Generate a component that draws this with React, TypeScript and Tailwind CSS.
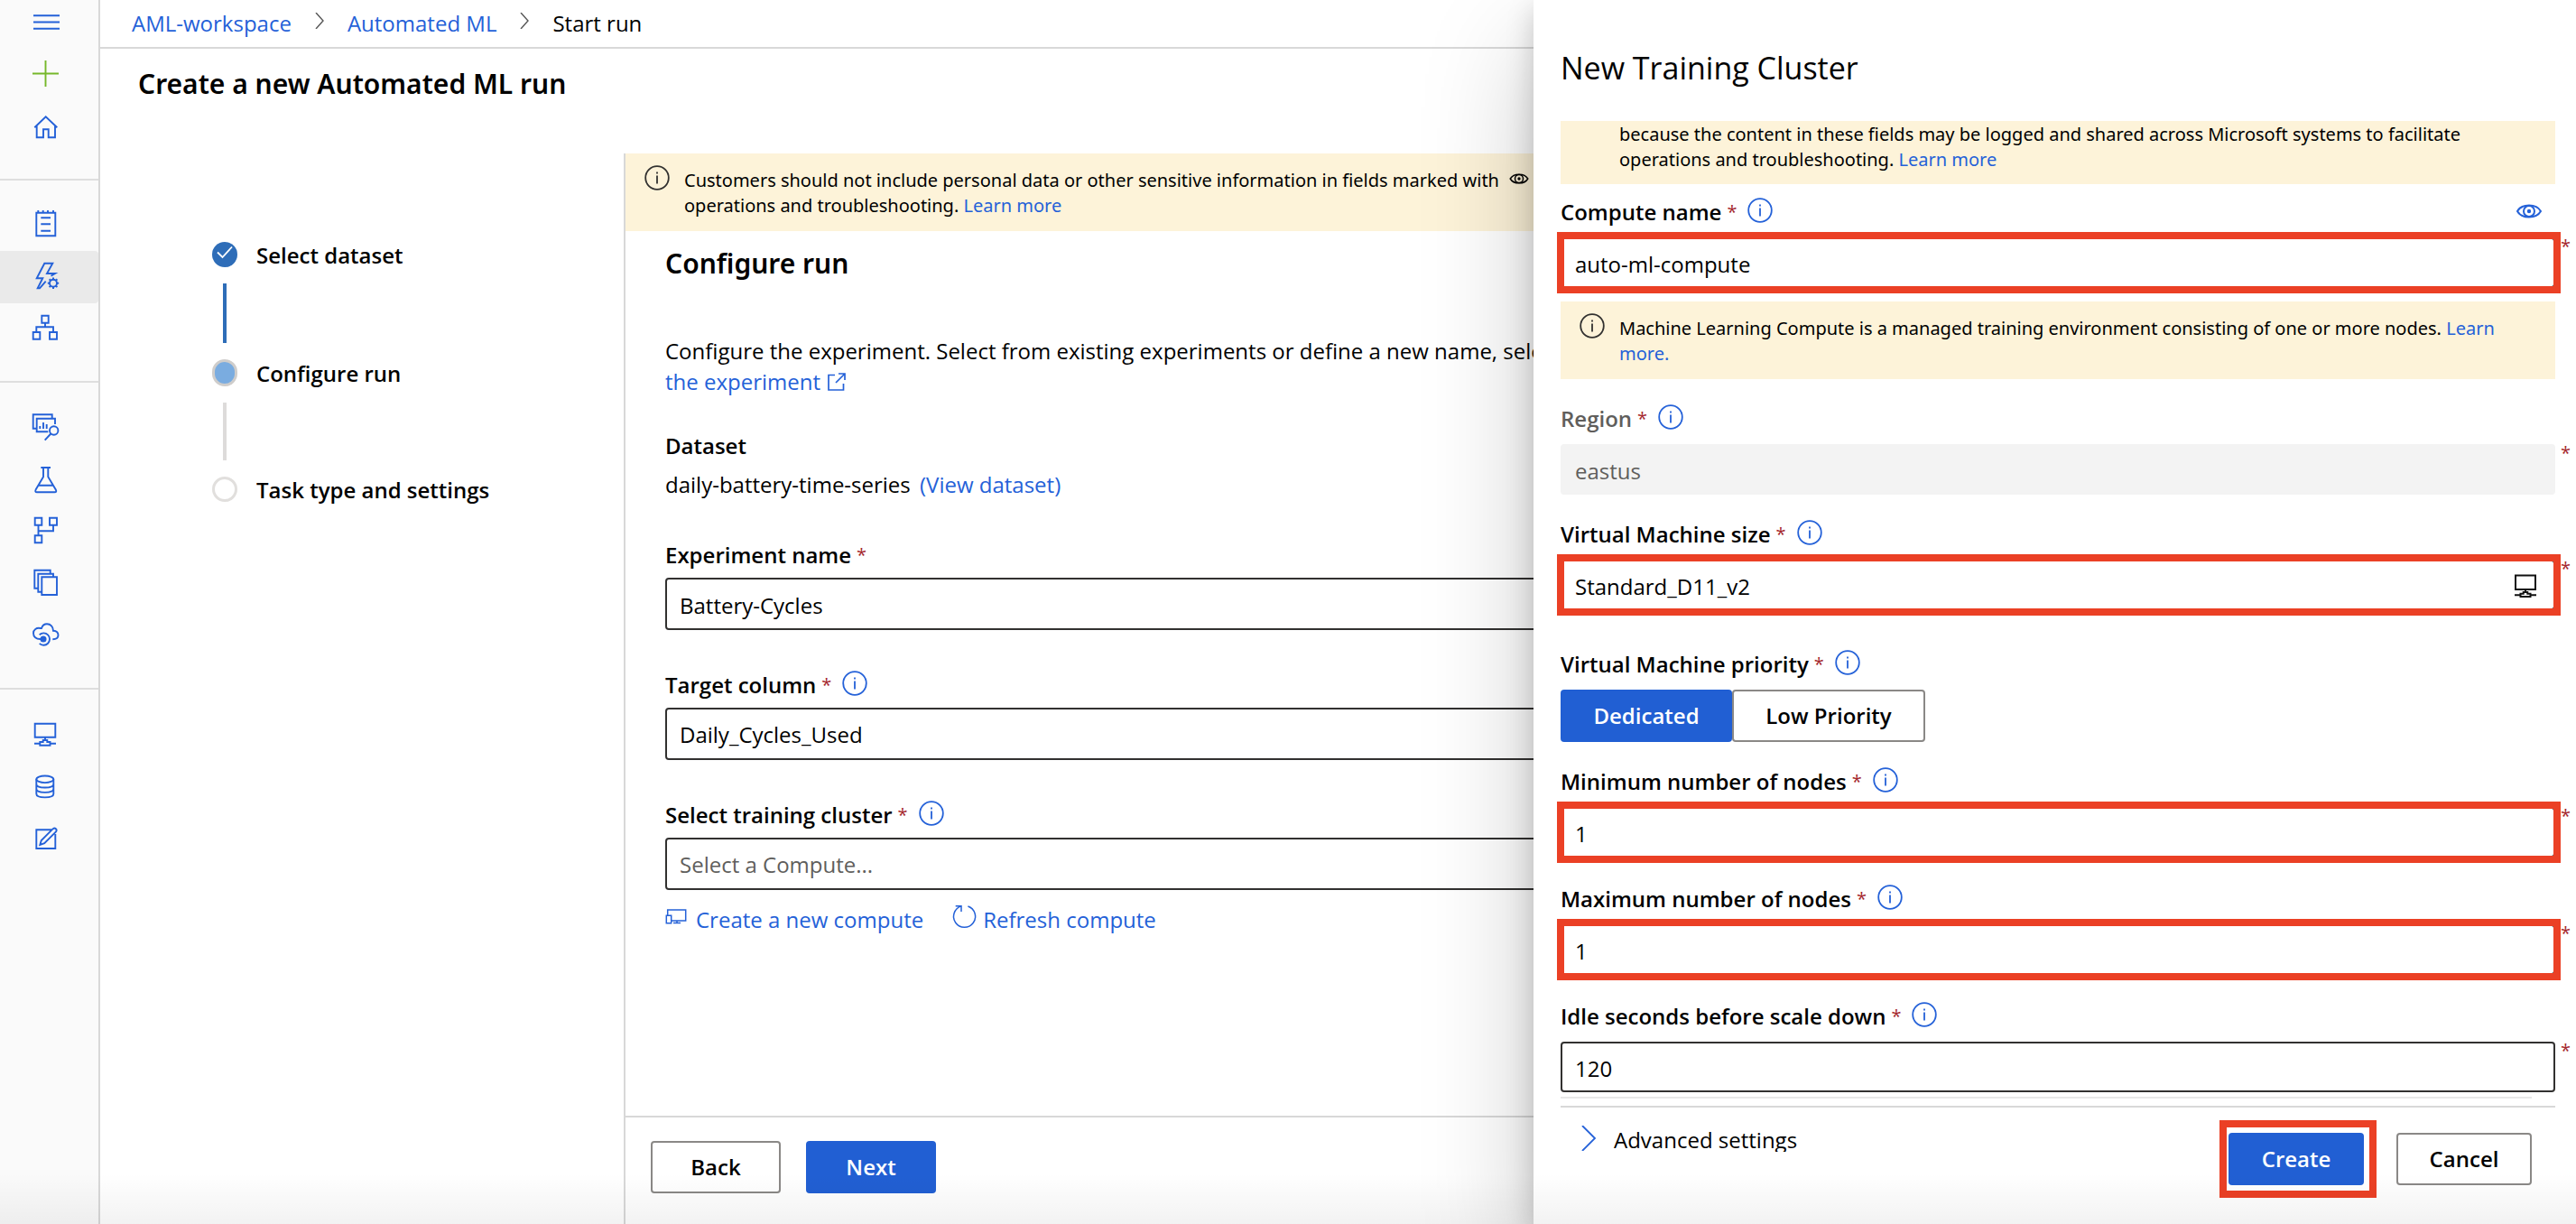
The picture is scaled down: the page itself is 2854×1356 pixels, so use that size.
import type { ReactNode } from "react";

type IconProps = { children: ReactNode };

function NavIcon({ children }: IconProps) {
  return (
    <svg
      viewBox="0 0 32 32"
      className="h-8 w-8 overflow-visible"
      fill="none"
      stroke="#2461d8"
      strokeWidth="1.9"
      aria-hidden="true"
    >
      {children}
    </svg>
  );
}

const gearTeeth = [0, 45, 90, 135, 180, 225, 270, 315];

const homeGroup = [
  {
    name: "Home",
    active: false,
    icon: (
      <NavIcon>
        <path d="M3.3 17.3 15.7 5.3 28.3 17.3M5.7 15.3V28.3H13V19.3H18.7V28.3H26V15.3" />
      </NavIcon>
    ),
  },
];

const authorGroup = [
  {
    name: "Notebooks",
    active: false,
    icon: (
      <NavIcon>
        <path d="M5.3 2.7H26.3V28.3H5.3ZM7.3 0V2.7M12.7 0V2.7M18 0V2.7M24 0V2.7M10.3 8.3H21M10.3 15.3H21M10.3 22.7H21" />
      </NavIcon>
    ),
  },
  {
    name: "Automated ML",
    active: true,
    icon: (
      <NavIcon>
        <path d="M21.5 14.7 26 12H17L23.3.7H14.3L5.7 17.3H12.3L6.7 28.3H9L15.7 20.7" />
        <circle cx="24" cy="22.7" r="4" />
        {gearTeeth.map((a) => (
          <path key={a} d="M24 18.7V16.5" strokeWidth="2" transform={`rotate(${a} 24 22.7)`} />
        ))}
      </NavIcon>
    ),
  },
  {
    name: "Designer",
    active: false,
    icon: (
      <NavIcon>
        <path d="M11.3.7H18.7V8.7H11.3ZM1.7 19H9.3V26.7H1.7ZM20 19H28V26.7H20ZM15 8.7V13.3M5.3 19V13.3H24V19" />
      </NavIcon>
    ),
  },
];

const assetGroup = [
  {
    name: "Datasets",
    active: false,
    icon: (
      <NavIcon>
        <path d="M5 17.7H1.7V2.3H22.7V6.3M18.3 21.3H5.7V6.7H26V13M9.3 15V18M13 11V18M16.7 13V18M21.3 23.5 14.7 30.7" />
        <circle cx="24.7" cy="20" r="4.7" />
      </NavIcon>
    ),
  },
  {
    name: "Experiments",
    active: false,
    icon: (
      <NavIcon>
        <path d="M10.3 3H21M13 3V13.3L4.6 27.5Q3.4 30.3 6 30.3H25.5Q28.2 30.3 26.8 27.5L18.3 13.3V3M7.5 22.7H24" />
      </NavIcon>
    ),
  },
  {
    name: "Pipelines",
    active: false,
    icon: (
      <NavIcon>
        <path d="M3.7.7H11.3V8.7H3.7ZM20 .7H28V8.7H20ZM3.7 20.3H11.3V28.3H3.7ZM7.5 8.7V20.3M7.5 15.3H24V8.7" />
      </NavIcon>
    ),
  },
  {
    name: "Models",
    active: false,
    icon: (
      <NavIcon>
        <path d="M11.3 8.3H28V28H11.3ZM11.3 24.7H7.3V4.7H24V8.3M7.3 20.7H3.3V.7H20.7V4.7" />
      </NavIcon>
    ),
  },
  {
    name: "Endpoints",
    active: false,
    icon: (
      <NavIcon>
        <path d="M13 19H9.5C5 19 2 16.5 2 12.5 2 8.8 5.3 6 9.8 7H11C12 4 14 2.3 17 2.3 21 2.3 24 5.3 24 9.8 27.5 10 29.5 12 29.5 14.7S27 19.2 23.3 19.2M8.7 14.2A6.7 6.7 0 1 1 8.7 23.9" />
        <circle cx="13" cy="19" r="2.6" fill="#2461d8" />
      </NavIcon>
    ),
  },
];

const manageGroup = [
  {
    name: "Compute",
    active: false,
    icon: (
      <NavIcon>
        <path d="M3.7 4.7H26.3V19.7H3.7ZM15 19.7V23M3 26.8H9.3M20.5 26.8H27M9.3 28.7V25H12.7V23H17.3V25H20.5V28.7Z" />
      </NavIcon>
    ),
  },
  {
    name: "Datastores",
    active: false,
    icon: (
      <NavIcon>
        <ellipse cx="14.8" cy="8.3" rx="9.5" ry="3.8" />
        <path d="M5.3 8.3V24.5C5.3 29.6 24.3 29.6 24.3 24.5V8.3M5.3 13.7C5.3 18.7 24.3 18.7 24.3 13.7M5.3 19.1C5.3 24.1 24.3 24.1 24.3 19.1" />
      </NavIcon>
    ),
  },
  {
    name: "Data labeling",
    active: false,
    icon: (
      <NavIcon>
        <path d="M22 6.3H5.3V27H26.3V11M9.3 23 10.8 18 23.7 5.2Q25.5 3.9 26.9 5.2 28.3 6.6 27 8.4L14.2 21.2Z" />
      </NavIcon>
    ),
  },
];

function NavGroup({ items, last = false }: { items: typeof authorGroup; last?: boolean }) {
  return (
    <ul className={last ? "pt-5" : "border-b-2 border-[#dedede] pt-5 pb-7"}>
      {items.map((item) => (
        <li key={item.name}>
          <button
            type="button"
            aria-label={item.name}
            className={
              item.active
                ? "flex h-[58px] w-full items-center justify-center rounded-r bg-[#eaeaea] pr-2"
                : "flex h-[58px] w-full items-center justify-center pr-2"
            }
          >
            {item.icon}
          </button>
        </li>
      ))}
    </ul>
  );
}

function InfoIcon({ dark = false }: { dark?: boolean }) {
  return (
    <svg
      viewBox="0 0 28 28"
      className={dark ? "h-7 w-7 shrink-0 text-[#323130]" : "h-7 w-7 shrink-0 text-[#2461d8]"}
      fill="none"
      stroke="currentColor"
      strokeWidth="1.8"
      aria-hidden="true"
    >
      <circle cx="14" cy="14" r="12.8" />
      <path d="M14 11.5V20.5M14 7.5V9.5" />
    </svg>
  );
}

function EyeIcon({ className }: { className: string }) {
  return (
    <svg viewBox="0 0 28 16" className={className} fill="none" stroke="currentColor" strokeWidth="2" aria-hidden="true">
      <path d="M1 8C6 -.6 22 -.6 27 8 22 16.6 6 16.6 1 8Z" />
      <circle cx="14" cy="8" r="6" />
      <circle cx="14" cy="8" r="1.2" fill="currentColor" />
    </svg>
  );
}

function ComputeIcon() {
  return (
    <svg viewBox="0 0 26 26" className="h-[26px] w-[26px]" fill="none" stroke="#111" strokeWidth="2" aria-hidden="true">
      <path d="M2 1.5H24V17H2ZM13 17V20M1 23.3H7.5M18.5 23.3H25M7.5 25V21.7H10.7V20H15.3V21.7H18.5V25Z" />
    </svg>
  );
}

function Chevron() {
  return (
    <svg viewBox="0 0 10 18" className="mb-1.5 h-[18px] w-[10px]" fill="none" stroke="#555" strokeWidth="1.4" aria-hidden="true">
      <path d="M1 0 9 9 1 18" />
    </svg>
  );
}

function Banner({ children }: { children: ReactNode }) {
  return (
    <div className="flex gap-4 bg-[#fdf3d9] pr-6 pl-[21px]">
      <div className="pt-[13px]">
        <InfoIcon dark />
      </div>
      <p className="pt-4 pb-3.5 font-['Noto_Sans','Segoe_UI',sans-serif] text-[20px] leading-7">{children}</p>
    </div>
  );
}

function FieldLabel({
  htmlFor,
  children,
  info = true,
  muted = false,
}: {
  htmlFor: string;
  children: ReactNode;
  info?: boolean;
  muted?: boolean;
}) {
  return (
    <div className="flex h-8 items-start">
      <label
        htmlFor={htmlFor}
        id={`${htmlFor}-label`}
        className={
          muted ? "text-[24px] leading-8 font-semibold text-[#605e5c]" : "text-[24px] leading-8 font-semibold"
        }
      >
        {children}
      </label>
      <span className="ml-1.5 text-[20px] leading-8 text-[#a4262c]">*</span>
      {info && (
        <button type="button" aria-label="More information" className="ml-3">
          <InfoIcon />
        </button>
      )}
    </div>
  );
}

function PanelField({
  id,
  label,
  value,
  eye = false,
  compute = false,
  highlight = false,
  disabled = false,
}: {
  id: string;
  label: string;
  value: string;
  eye?: boolean;
  compute?: boolean;
  highlight?: boolean;
  disabled?: boolean;
}) {
  return (
    <div>
      <div className="mb-3 flex items-start justify-between">
        <FieldLabel htmlFor={id} muted={disabled}>
          {label}
        </FieldLabel>
        {eye && <EyeIcon className="mt-[7px] mr-[15px] h-4 w-7 text-[#2461d8]" />}
      </div>
      <div className="relative">
        <input
          id={id}
          type="text"
          defaultValue={value}
          disabled={disabled}
          className={
            disabled
              ? "h-14 w-full rounded bg-[#f3f3f3] px-4 pt-0.5 text-[24px] text-[#605e5c]"
              : "h-14 w-full rounded border-2 border-[#323130] bg-white px-3.5 pt-0.5 text-[24px]"
          }
        />
        {compute && (
          <span className="absolute top-4 right-5">
            <ComputeIcon />
          </span>
        )}
        {highlight && (
          <span className="pointer-events-none absolute -top-1.5 -right-1.5 -bottom-1.5 -left-1 border-8 border-[#eb4025]" />
        )}
        <span className="absolute -top-1 left-full pl-1.5 text-[20px] leading-7 text-[#a4262c]">*</span>
      </div>
    </div>
  );
}

const link = "text-[#2461d8]";

export default function App() {
  return (
    <div className="relative flex min-h-screen overflow-hidden bg-white font-['Open_Sans','Segoe_UI',sans-serif] text-[24px] text-black">
      <nav aria-label="Main" className="w-[111px] shrink-0 border-r-2 border-[#d8d8d8] bg-[#fafafa]">
        <div className="border-b-2 border-[#dedede] pb-7">
          <button type="button" aria-label="Menu" className="flex h-[52px] w-full items-center justify-center pr-2">
            <NavIcon>
              <path d="M2 7.3H31M2 14.5H31M2 21.7H31" />
            </NavIcon>
          </button>
          <button type="button" aria-label="New" className="flex h-[58px] w-full items-center justify-center pr-2">
            <svg viewBox="0 0 32 32" className="h-8 w-8" stroke="#76b82a" strokeWidth="1.9" aria-hidden="true">
              <path d="M15.5 2V31M1 16.5H30" />
            </svg>
          </button>
          <button
            type="button"
            aria-label={homeGroup[0].name}
            className="flex h-[60px] w-full items-center justify-center pr-2"
          >
            {homeGroup[0].icon}
          </button>
        </div>
        <NavGroup items={authorGroup} />
        <NavGroup items={assetGroup} />
        <NavGroup items={manageGroup} last />
      </nav>

      <div className="flex min-w-0 flex-1 flex-col">
        <nav
          aria-label="Breadcrumb"
          className="flex h-[54px] items-center gap-[26px] border-b-2 border-[#d8d8d8] pl-[35px] leading-8"
        >
          <a href="#workspace" className={link}>
            AML-workspace
          </a>
          <Chevron />
          <a href="#automated-ml" className={link}>
            Automated ML
          </a>
          <Chevron />
          <span>Start run</span>
        </nav>
        <h1 className="mt-[19px] pl-[42px] font-['Noto_Sans','Segoe_UI',sans-serif] text-[30px] leading-10 font-semibold">
          Create a new Automated ML run
        </h1>

        <div className="mt-[57px] flex flex-1">
          <ol className="flex w-[580px] shrink-0 flex-col pt-[98px] pl-[124px] font-semibold">
            <li className="grid grid-cols-[28px_1fr] items-center gap-x-[21px]">
              <svg viewBox="0 0 28 28" className="h-7 w-7" aria-hidden="true">
                <circle cx="14" cy="14" r="14" fill="#2e6db8" />
                <path d="M6 11.5 11.5 17 22 5.5" fill="none" stroke="#fff" strokeWidth="1.8" />
              </svg>
              <span className="h-7 leading-[30px]">Select dataset</span>
              <span className="my-[18px] h-[66px] w-1 justify-self-center bg-[#2e6db8]" />
            </li>
            <li className="grid grid-cols-[28px_1fr] items-center gap-x-[21px]">
              <span className="h-[30px] w-7 rounded-full border-[3px] border-[#cfcdcb] bg-[#7aace0]" />
              <span className="h-7 leading-[30px]">Configure run</span>
              <span className="my-[18px] h-16 w-1 justify-self-center bg-[#dddbda]" />
            </li>
            <li className="grid grid-cols-[28px_1fr] items-center gap-x-[21px]">
              <span className="h-7 w-7 rounded-full border-[3px] border-[#e1dfdd] bg-white" />
              <span className="h-7 leading-[30px]">Task type and settings</span>
            </li>
          </ol>

          <main className="flex min-w-0 flex-1 flex-col border-l-2 border-[#d8d8d8]">
            <Banner>
              Customers should not include personal data or other sensitive information in fields marked with{" "}
              <EyeIcon className="mx-1.5 inline h-3 w-[22px] align-[3px]" /> because the content in these fields may
              be logged and shared across Microsoft systems to facilitate
              <br />
              operations and troubleshooting.{" "}
              <a href="#learn" className={link}>
                Learn more
              </a>
            </Banner>
            <div className="flex-1 pr-11 pb-8 pl-11">
              <h2 className="mt-4 font-['Noto_Sans','Segoe_UI',sans-serif] text-[30px] leading-10 font-semibold">
                Configure run
              </h2>
              <p className="mt-[60px] leading-[34px] whitespace-nowrap">
                Configure the experiment. Select from existing experiments or define a new name, select the target
                column and the training compute.{" "}
                <a href="#configure" className={link}>
                  Learn more on how to configure
                  <br />
                  the experiment
                  <svg
                    viewBox="0 0 20 20"
                    className="ml-2 inline h-5 w-5 align-[-1px]"
                    fill="none"
                    stroke="currentColor"
                    strokeWidth="1.7"
                    aria-hidden="true"
                  >
                    <path d="M8 2.5H1V19H17.5V12M12 1H19V8M19 1 9 11" />
                  </svg>
                </a>
              </p>
              <h3 className="mt-[38px] leading-8 font-semibold">Dataset</h3>
              <p className="mt-[11px] leading-8">
                daily-battery-time-series{" "}
                <a href="#dataset" className="ml-1 text-[#2461d8]">
                  (View dataset)
                </a>
              </p>

              <div className="mt-[46px] flex flex-col gap-[45px]">
                <div>
                  <FieldLabel htmlFor="experiment" info={false}>
                    Experiment name
                  </FieldLabel>
                  <input
                    id="experiment"
                    type="text"
                    defaultValue="Battery-Cycles"
                    className="mt-[9px] block h-[58px] w-full rounded border-2 border-[#323130] bg-white px-3.5 pt-0.5"
                  />
                </div>
                <div>
                  <FieldLabel htmlFor="target">Target column</FieldLabel>
                  <select
                    id="target"
                    className="mt-[9px] block h-[58px] w-full appearance-none rounded border-2 border-[#323130] bg-white px-3.5 pt-0.5"
                  >
                    <option>Daily_Cycles_Used</option>
                  </select>
                </div>
                <div>
                  <FieldLabel htmlFor="cluster">Select training cluster</FieldLabel>
                  <select
                    id="cluster"
                    className="mt-[9px] block h-[58px] w-full appearance-none rounded border-2 border-[#323130] bg-white px-3.5 pt-0.5 text-[#605e5c]"
                  >
                    <option>Select a Compute...</option>
                  </select>
                </div>
              </div>

              <div className="mt-[17px] flex gap-8 leading-8 text-[#2461d8]">
                <button type="button" className="flex gap-2.5">
                  <svg viewBox="0 0 24 32" className="h-8 w-6" fill="none" stroke="currentColor" strokeWidth="1.5" aria-hidden="true">
                    <path d="M2.7 11.3V5H22.7V17H6.7M1.3 11.3H6.7V19.7H1.3ZM9 19.5H17M13 17V19.5" />
                  </svg>
                  Create a new compute
                </button>
                <button type="button" className="flex gap-1.5">
                  <svg
                    viewBox="0 0 28 32"
                    className="h-8 w-7 overflow-visible"
                    fill="none"
                    stroke="currentColor"
                    strokeWidth="1.5"
                    aria-hidden="true"
                  >
                    <path d="M3.7.7H10V7M10 .9A12 12 0 1 0 17.4 1" />
                  </svg>
                  Refresh compute
                </button>
              </div>
            </div>
            <footer className="flex gap-7 border-t-2 border-[#d8d8d8] pt-[26px] pb-[34px] pl-7">
              <button type="button" className="h-[58px] w-36 rounded border-2 border-[#8a8886] bg-white font-semibold">
                Back
              </button>
              <button type="button" className="h-[58px] w-36 rounded bg-[#215fd3] font-semibold text-white">
                Next
              </button>
            </footer>
          </main>
        </div>
      </div>

      <section
        aria-labelledby="panel-title"
        className="absolute inset-y-0 right-0 w-[1155px] max-w-full bg-white pr-[23px] pl-[30px] shadow-[0_51px_115px_rgba(0,0,0,0.22),0_10px_29px_rgba(0,0,0,0.18)]"
      >
        <h2 id="panel-title" className="pt-[53px] text-[34px] leading-[44px]">
          New Training Cluster
        </h2>
        <form onSubmit={(e) => e.preventDefault()} className="mt-[37px]">
          <p className="bg-[#fdf3d9] pt-px pr-6 pb-[13px] pl-[65px] font-['Noto_Sans','Segoe_UI',sans-serif] text-[20px] leading-7">
            because the content in these fields may be logged and shared across Microsoft systems to facilitate
            <br />
            operations and troubleshooting.{" "}
            <a href="#learn" className={link}>
              Learn more
            </a>
          </p>
          <div className="mt-[15px]">
            <PanelField id="name" label="Compute name" value="auto-ml-compute" eye highlight />
          </div>
          <div className="mt-[15px]">
            <Banner>
              Machine Learning Compute is a managed training environment consisting of one or more nodes.{" "}
              <a href="#compute" className={link}>
                Learn
                <br />
                more.
              </a>
            </Banner>
          </div>
          <div className="mt-7">
            <PanelField id="region" label="Region" value="eastus" disabled />
          </div>
          <div className="mt-7">
            <PanelField id="size" label="Virtual Machine size" value="Standard_D11_v2" compute highlight />
          </div>
          <div className="mt-11">
            <FieldLabel htmlFor="dedicated">Virtual Machine priority</FieldLabel>
            <div role="group" aria-labelledby="dedicated-label" className="mt-3 flex">
              <button
                id="dedicated"
                type="button"
                className="h-[58px] w-[190px] rounded bg-[#215fd3] font-semibold text-white"
              >
                Dedicated
              </button>
              <button
                type="button"
                className="h-[58px] w-[214px] rounded border-2 border-[#8a8886] bg-white font-semibold"
              >
                Low Priority
              </button>
            </div>
          </div>
          <div className="mt-7 flex flex-col gap-[30px]">
            <PanelField id="min" label="Minimum number of nodes" value="1" highlight />
            <PanelField id="max" label="Maximum number of nodes" value="1" highlight />
            <PanelField id="idle" label="Idle seconds before scale down" value="120" />
          </div>
          <hr className="mt-[5px] mr-[26px] border-t-2 border-[#e8e8e8]" />
          <div className="mt-2 flex items-start border-t-2 border-[#d8d8d8] pr-[26px] pl-[22px]">
            <button type="button" className="mt-5 flex h-[29px] gap-[19px] overflow-hidden leading-8">
              <svg viewBox="0 0 18 28" className="h-7 w-[18px]" fill="none" stroke="#2461d8" strokeWidth="1.8" aria-hidden="true">
                <path d="M2 0 16 14 2 28" />
              </svg>
              Advanced settings
            </button>
            <div className="relative mt-7 mr-9 ml-auto">
              <button type="submit" className="block h-[58px] w-[150px] rounded bg-[#215fd3] font-semibold text-white">
                Create
              </button>
              <span className="pointer-events-none absolute -top-3.5 -right-3.5 -bottom-3.5 -left-2.5 border-8 border-[#eb4025]" />
            </div>
            <button
              type="button"
              className="mt-7 h-[58px] w-[150px] rounded border-2 border-[#8a8886] bg-white font-semibold"
            >
              Cancel
            </button>
          </div>
        </form>
      </section>
      <div className="pointer-events-none absolute inset-x-0 bottom-0 h-14 bg-linear-to-t from-black/5 to-transparent" />
    </div>
  );
}
